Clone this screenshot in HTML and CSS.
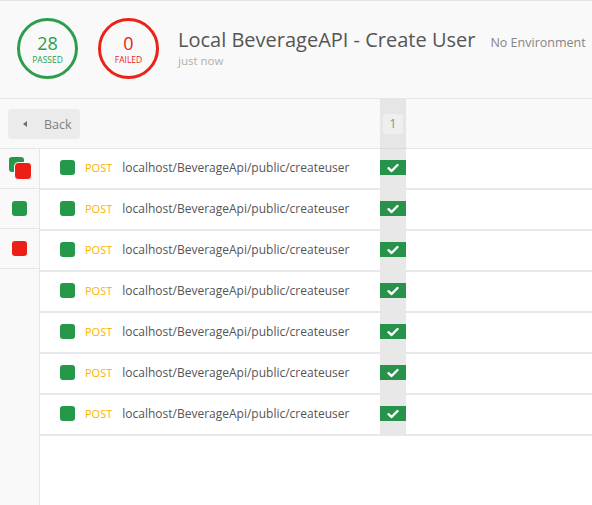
FILE: index.html
```html
<!DOCTYPE html>
<html>
<head>
<meta charset="utf-8">
<link rel="stylesheet" href="styles.css">
</head>
<body>
<div class="page">
  <header class="header">
    <div class="stat stat-pass"><span class="stat-num">28</span><span class="stat-label">PASSED</span></div>
    <div class="stat stat-fail"><span class="stat-num">0</span><span class="stat-label">FAILED</span></div>
    <div class="info">
      <div class="title-row"><span class="title">Local BeverageAPI - Create User</span><span class="env">No Environment</span></div>
      <div class="time">just now</div>
    </div>
  </header>
  <div class="toolbar">
    <div class="toolbar-left">
      <button class="back"><span class="caret"></span><span>Back</span></button>
    </div>
    <div class="col-head"><span class="badge">1</span></div>
    <div></div>
  </div>
  <div class="content">
    <aside class="sidebar">
      <div class="side-item"><span class="stack"><span class="sq green sq-back"></span><span class="sq red sq-front"></span></span></div>
      <div class="side-item"><span class="sq green"></span></div>
      <div class="side-item"><span class="sq red"></span></div>
    </aside>
    <div class="list">
      <div class="row"><div class="req"><span class="sq green"></span><span class="method">POST</span><span class="url">localhost/BeverageApi/public/createuser</span></div><div class="cell"><span class="check"><svg width="12" height="10" viewBox="0 0 12 10"><polyline points="1.5,5.2 4.6,8 10.5,2" fill="none" stroke="#fff" stroke-width="2.4" stroke-linecap="round" stroke-linejoin="round"/></svg></span></div><div></div></div>
      <div class="row"><div class="req"><span class="sq green"></span><span class="method">POST</span><span class="url">localhost/BeverageApi/public/createuser</span></div><div class="cell"><span class="check"><svg width="12" height="10" viewBox="0 0 12 10"><polyline points="1.5,5.2 4.6,8 10.5,2" fill="none" stroke="#fff" stroke-width="2.4" stroke-linecap="round" stroke-linejoin="round"/></svg></span></div><div></div></div>
      <div class="row"><div class="req"><span class="sq green"></span><span class="method">POST</span><span class="url">localhost/BeverageApi/public/createuser</span></div><div class="cell"><span class="check"><svg width="12" height="10" viewBox="0 0 12 10"><polyline points="1.5,5.2 4.6,8 10.5,2" fill="none" stroke="#fff" stroke-width="2.4" stroke-linecap="round" stroke-linejoin="round"/></svg></span></div><div></div></div>
      <div class="row"><div class="req"><span class="sq green"></span><span class="method">POST</span><span class="url">localhost/BeverageApi/public/createuser</span></div><div class="cell"><span class="check"><svg width="12" height="10" viewBox="0 0 12 10"><polyline points="1.5,5.2 4.6,8 10.5,2" fill="none" stroke="#fff" stroke-width="2.4" stroke-linecap="round" stroke-linejoin="round"/></svg></span></div><div></div></div>
      <div class="row"><div class="req"><span class="sq green"></span><span class="method">POST</span><span class="url">localhost/BeverageApi/public/createuser</span></div><div class="cell"><span class="check"><svg width="12" height="10" viewBox="0 0 12 10"><polyline points="1.5,5.2 4.6,8 10.5,2" fill="none" stroke="#fff" stroke-width="2.4" stroke-linecap="round" stroke-linejoin="round"/></svg></span></div><div></div></div>
      <div class="row"><div class="req"><span class="sq green"></span><span class="method">POST</span><span class="url">localhost/BeverageApi/public/createuser</span></div><div class="cell"><span class="check"><svg width="12" height="10" viewBox="0 0 12 10"><polyline points="1.5,5.2 4.6,8 10.5,2" fill="none" stroke="#fff" stroke-width="2.4" stroke-linecap="round" stroke-linejoin="round"/></svg></span></div><div></div></div>
      <div class="row"><div class="req"><span class="sq green"></span><span class="method">POST</span><span class="url">localhost/BeverageApi/public/createuser</span></div><div class="cell"><span class="check"><svg width="12" height="10" viewBox="0 0 12 10"><polyline points="1.5,5.2 4.6,8 10.5,2" fill="none" stroke="#fff" stroke-width="2.4" stroke-linecap="round" stroke-linejoin="round"/></svg></span></div><div></div></div>
    </div>
  </div>
</div>
</body>
</html>
```
FILE: styles.css
```css
* { box-sizing: border-box; }
html, body { margin: 0; padding: 0; }
body {
  font-family: "Open Sans", "Liberation Sans", sans-serif;
  background: #fff;
  color: #505050;
  width: 592px;
  height: 505px;
  overflow: hidden;
}
.page { display: flex; flex-direction: column; height: 505px; }

.header {
  height: 99px;
  flex: none;
  display: flex;
  align-items: flex-start;
  padding: 17px 0 0 17px;
  background: #f9f9f9;
  border-top: 1px solid #e4e4e4;
  border-bottom: 1px solid #e6e6e6;
  white-space: nowrap;
}
.stat {
  width: 61px;
  height: 61px;
  border-radius: 50%;
  border: 3px solid;
  display: flex;
  flex-direction: column;
  align-items: center;
  justify-content: center;
  margin-right: 20px;
  flex: none;
}
.stat-pass { border-color: #2c9e4b; color: #2c9e4b; }
.stat-fail { border-color: #ea2218; color: #ea2218; }
.stat-num { font-size: 18px; line-height: 20px; margin-top: 1px; }
.stat-label { font-size: 8.5px; line-height: 10px; margin-top: 2px; }

.info { padding-top: 9px; margin-left: -1px; flex: none; }
.title-row { display: flex; align-items: baseline; }
.title { font-size: 20px; line-height: 26px; color: #555; }
.env { font-size: 12.5px; color: #858585; margin-left: 15px; }
.time { font-size: 11.5px; color: #b0b0b0; line-height: 16px; margin-top: 0; }

.toolbar {
  height: 50px;
  flex: none;
  display: grid;
  grid-template-columns: 380px 26px 1fr;
  background: #f9f9f9;
  border-bottom: 1px solid #e6e6e6;
}
.toolbar-left { display: flex; align-items: center; padding-left: 8px; padding-top: 1px; }
.back {
  width: 72px;
  height: 30px;
  border: none;
  border-radius: 3px;
  background: #ebebeb;
  display: flex;
  align-items: center;
  padding: 0 0 0 15px;
  font-family: "Open Sans", "Liberation Sans", sans-serif;
  font-size: 12.5px;
  color: #808080;
}
.caret {
  width: 0; height: 0;
  border-top: 3.5px solid transparent;
  border-bottom: 3.5px solid transparent;
  border-right: 4px solid #707070;
  margin-right: 17px;
}
.col-head {
  background: #e6e6e6;
  border-bottom: 1px solid #d9d9d9;
  margin-bottom: -1px;
  display: flex;
  justify-content: center;
  padding-top: 15px;
}
.badge {
  width: 20px;
  height: 20px;
  border-radius: 3px;
  background: #efefef;
  color: #8a8a8a;
  font-size: 12px;
  line-height: 20px;
  text-align: center;
}

.content { flex: 1; display: flex; }
.sidebar {
  width: 40px;
  flex: none;
  background: #f9f9f9;
  border-right: 1px solid #e6e6e6;
}
.side-item {
  height: 40px;
  border-bottom: 1px solid #e6e6e6;
  display: flex;
  align-items: center;
  justify-content: center;
}
.sq { width: 15px; height: 15px; border-radius: 3px; display: block; }
.green { background: #26984a; }
.red { background: #ec1f17; }
.stack { position: relative; width: 23px; height: 23px; margin-left: 1px; }
.sq-back { position: absolute; left: 0; top: 0; }
.sq-front {
  position: absolute; left: 5px; top: 5px;
  width: 18px; height: 18px;
  border: 1.5px solid #fff;
  border-radius: 4px;
}

.list { flex: 1; }
.row {
  display: grid;
  grid-template-columns: 340px 26px 1fr;
  height: 41px;
  border-bottom: 2px solid #e8e8e8;
}
.req { display: flex; align-items: center; padding-left: 20px; padding-bottom: 2px; }
.method { color: #f8b400; font-size: 11px; margin-left: 10px; }
.url { color: #555; font-size: 12px; margin-left: 10px; }
.cell {
  background: #e8e8e8;
  display: flex;
  align-items: center;
  padding-bottom: 2px;
}
.check {
  width: 26px;
  height: 15px;
  background: #27934a;
  display: flex;
  align-items: center;
  justify-content: center;
}
.check svg { display: block; }
```
